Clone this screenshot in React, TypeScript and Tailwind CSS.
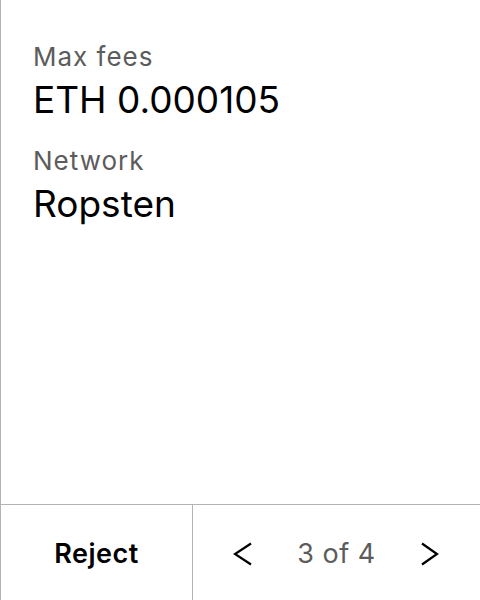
import React from "react";

export default function App() {
  return (
    <div
      className="w-[480px] h-[600px] bg-white flex flex-col border-l border-[#b3b3b3] text-black"
      style={{ fontFamily: "Inter, 'Noto Sans', sans-serif" }}
    >
      <div className="flex-1 pl-[32px] pt-[42px]">
        <div className="text-[26px] leading-[30px] tracking-[1px] text-[#5c5c5c]">Max fees</div>
        <div className="text-[37px] leading-[44px] mt-[6px]">ETH 0.000105</div>
        <div className="text-[26px] leading-[30px] tracking-[1px] text-[#5c5c5c] mt-[24px]">Network</div>
        <div className="text-[37px] leading-[44px] mt-[6px]">Ropsten</div>
      </div>
      <div className="h-[96px] border-t border-[#b3b3b3] flex">
        <button className="w-[192px] border-r border-[#b3b3b3] flex items-center justify-center pt-[2px] text-[27px] leading-none tracking-[0.5px] font-semibold">
          Reject
        </button>
        <div className="flex-1 flex items-center justify-between px-[40px] pt-[2px]">
          <svg width="20" height="24" viewBox="0 0 20 24" className="mt-[1px]">
            <path d="M18 1.5 L2 12 L18 22.5" fill="none" stroke="black" strokeWidth="2.2" />
          </svg>
          <span className="text-[27px] leading-none tracking-[0.5px] text-[#5c5c5c]">3 of 4</span>
          <svg width="20" height="24" viewBox="0 0 20 24" className="mt-[1px]">
            <path d="M2 1.5 L17 12 L2 22.5" fill="none" stroke="black" strokeWidth="2.2" />
          </svg>
        </div>
      </div>
    </div>
  );
}
